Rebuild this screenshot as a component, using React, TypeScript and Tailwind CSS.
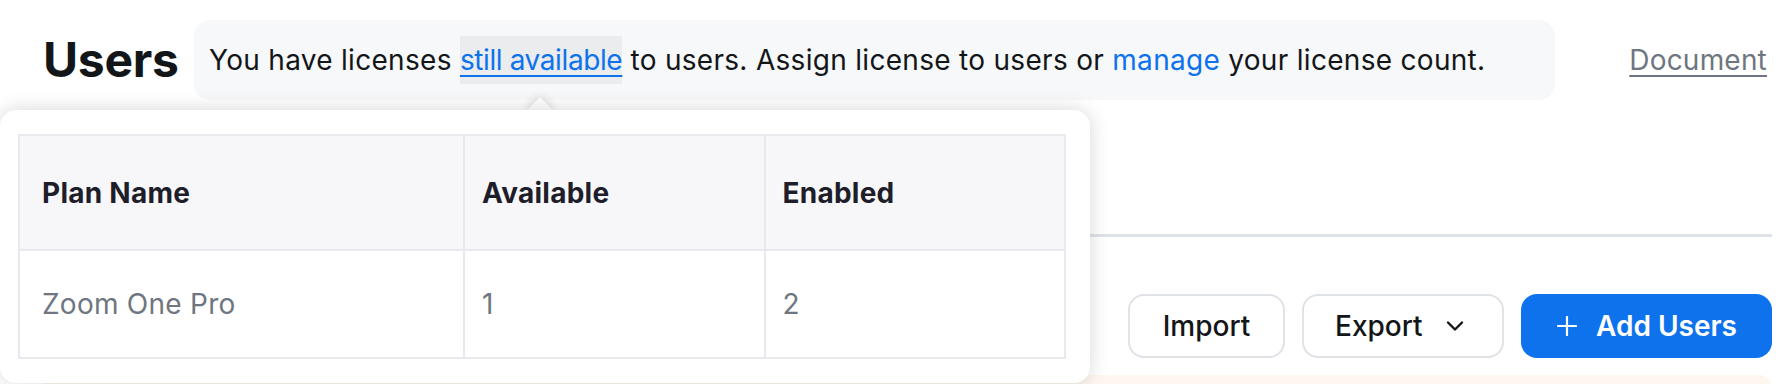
import React from "react";

export default function App() {
  return (
    <div
      className="relative w-[1780px] h-[384px] overflow-hidden bg-white text-[#131619]"
      style={{ fontFamily: "Inter, 'Noto Sans', Arial, sans-serif" }}
    >
      {/* Header row */}
      <div className="flex items-center pt-[20px] h-[100px]">
        <h1 className="ml-[43px] w-[133px] text-[48px] font-bold leading-none tracking-[-0.3px] text-[#131619]">
          Users
        </h1>
        <div className="ml-[18px] flex h-[80px] w-[1361px] items-center rounded-[16px] bg-[#f7f8fa] pl-[15px] text-[28px] leading-none tracking-[0.3px] whitespace-nowrap">
          <span>You have licenses&nbsp;</span>
          <span className="inline-block bg-[#ebecee] py-[10px] tracking-[-0.4px] text-[#0e72ed] underline decoration-2 underline-offset-[5px]">
            still available
          </span>
          <span>&nbsp;to users. Assign license to users or&nbsp;</span>
          <span className="text-[#0e72ed]">manage</span>
          <span>&nbsp;your license count.</span>
        </div>
        <a className="ml-auto mr-[13px] text-[28px] leading-none tracking-[0.2px] text-[#6e7681] underline decoration-2 underline-offset-[5px]">
          Document
        </a>
      </div>

      {/* Divider */}
      <div className="mt-[134px] ml-[43px] mr-[8px] h-[3px] bg-[#dfe3e8]" />

      {/* Buttons */}
      <div className="mt-[57px] mr-[8px] flex justify-end gap-[17px]">
        <button className="flex h-[64px] w-[157px] items-center justify-center rounded-[16px] border-2 border-[#dfe2e6] bg-white text-[28px] font-medium text-[#131619]">
          Import
        </button>
        <button className="flex h-[64px] w-[202px] items-center rounded-[16px] border-2 border-[#dfe2e6] bg-white pl-[31px] text-[28px] font-medium text-[#131619]">
          Export
          <svg className="ml-[22px]" width="20" height="12" viewBox="0 0 20 12" fill="none">
            <path d="M3 2.5 L10 9.5 L17 2.5" stroke="#131619" strokeWidth="2.4" strokeLinecap="round" strokeLinejoin="round" />
          </svg>
        </button>
        <button className="flex h-[64px] w-[251px] items-center rounded-[16px] bg-[#0e72ed] pl-[36px] text-[28px] font-semibold text-white">
          <svg width="20" height="20" viewBox="0 0 20 20" fill="none">
            <path d="M10 1 V19 M1 10 H19" stroke="white" strokeWidth="2.2" strokeLinecap="round" />
          </svg>
          <span className="ml-[19px]">Add Users</span>
        </button>
      </div>

      {/* Bottom notice strip */}
      <div className="mt-[17px] ml-[43px] mr-[8px] h-[20px] rounded-t-[12px] bg-[#fef7ef]" />

      {/* Popover arrow */}
      <div className="absolute left-[531px] top-[101px] h-[18px] w-[18px] rotate-45 bg-white shadow-[0_0_12px_rgba(0,0,0,0.18)]" />

      {/* Popover */}
      <div className="absolute left-0 top-[110px] h-[273px] w-[1090px] rounded-[16px] bg-white pl-[18px] pr-[24px] pt-[24px] shadow-[0_0_20px_rgba(0,0,0,0.16)]">
        <table className="w-[1048px] border-collapse text-[28px] leading-none tracking-[0.25px]">
          <thead>
            <tr className="h-[115px] bg-[#f7f7fa]">
              <th className="w-[446px] border-2 border-[#e8e9ed] pl-[22px] text-left font-bold text-[#1e1e2b]">Plan Name</th>
              <th className="w-[301px] border-2 border-[#e8e9ed] pl-[17px] text-left font-bold text-[#1e1e2b]">Available</th>
              <th className="w-[301px] border-2 border-[#e8e9ed] pl-[17px] text-left font-bold text-[#1e1e2b]">Enabled</th>
            </tr>
          </thead>
          <tbody>
            <tr className="h-[108px]">
              <td className="border-2 border-[#e8e9ed] pl-[22px] text-[#6e7681]">Zoom One Pro</td>
              <td className="border-2 border-[#e8e9ed] pl-[17px] text-[#6e7681]">1</td>
              <td className="border-2 border-[#e8e9ed] pl-[17px] text-[#6e7681]">2</td>
            </tr>
          </tbody>
        </table>
      </div>
    </div>
  );
}
